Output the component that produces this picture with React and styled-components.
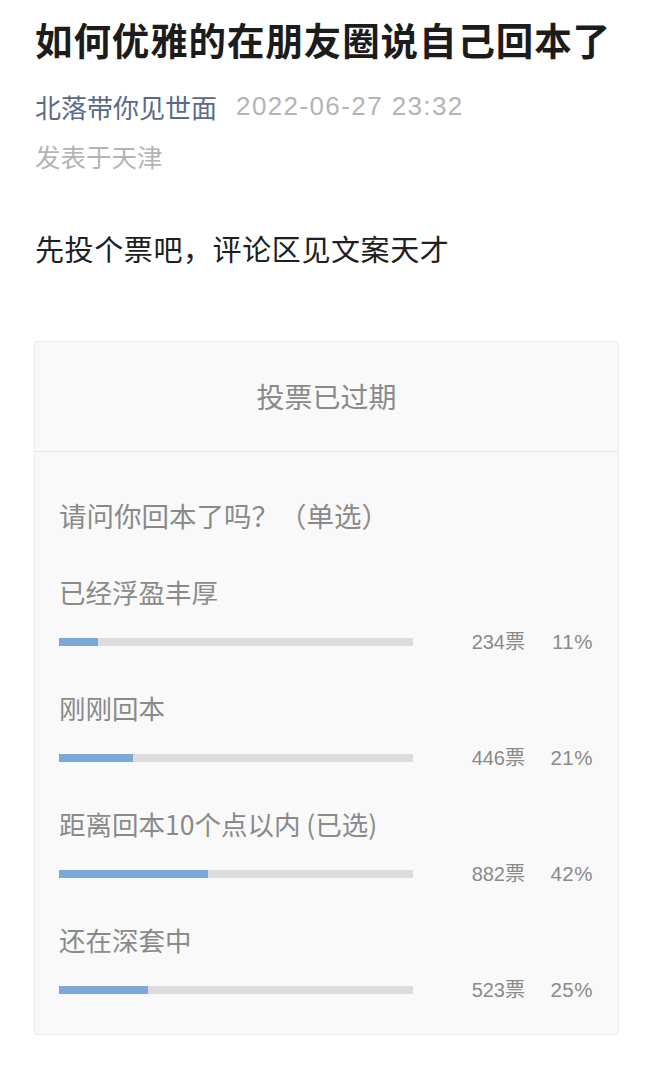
import React from 'react';
import styled, { createGlobalStyle } from 'styled-components';

const GlobalStyle = createGlobalStyle`
    body {
        margin: 0;
        background: #ffffff;
        font-family: "Noto Sans CJK SC", "Noto Sans", sans-serif;
    }
`;

const options = [
    { label: '已经浮盈丰厚', votes: 234, pct: 11 },
    { label: '刚刚回本', votes: 446, pct: 21 },
    { label: '距离回本10个点以内 (已选)', votes: 882, pct: 42 },
    { label: '还在深套中', votes: 523, pct: 25 },
];

const App = () => {
    return (
        <>
            <GlobalStyle />
            <Page>
                <Title>如何优雅的在朋友圈说自己回本了</Title>
                <Meta>
                    <Author>北落带你见世面</Author>
                    <Time>2022-06-27 23:32</Time>
                </Meta>
                <Location>发表于天津</Location>
                <Body>先投个票吧，评论区见文案天才</Body>

                <VoteCard>
                    <VoteHeader>投票已过期</VoteHeader>
                    <VoteBody>
                        <Question>请问你回本了吗？（单选）</Question>
                        {options.map((opt) => (
                            <Option key={opt.label}>
                                <OptionLabel>{opt.label}</OptionLabel>
                                <ResultRow>
                                    <Track>
                                        <Fill style={{ width: `${opt.pct}%` }} />
                                    </Track>
                                    <Count>{opt.votes}票</Count>
                                    <Percent>{opt.pct}%</Percent>
                                </ResultRow>
                            </Option>
                        ))}
                    </VoteBody>
                </VoteCard>
            </Page>
        </>
    );
};

const Page = styled.div`
    padding: 13px 34px 40px 35px;
`;

const Title = styled.h1`
    margin: 0;
    font-size: 37.5px;
    line-height: 52px;
    font-weight: 700;
    color: #1c1c1c;
    letter-spacing: 0.9px;
    white-space: nowrap;
`;

const Meta = styled.div`
    display: flex;
    align-items: center;
    gap: 19px;
    margin-top: 21px;
    height: 40px;
`;

const Author = styled.span`
    font-size: 26px;
    color: #5b6987;
`;

const Time = styled.span`
    font-family: "Liberation Sans", "Noto Sans CJK SC", sans-serif;
    font-size: 26px;
    letter-spacing: 1.4px;
    color: #b4b4b4;
`;

const Location = styled.div`
    margin-top: 10px;
    font-size: 25.5px;
    line-height: 40px;
    color: #b4b4b4;
`;

const Body = styled.p`
    margin: 50px 0 0;
    font-size: 29px;
    line-height: 44px;
    letter-spacing: 0.6px;
    color: #202020;
`;

const VoteCard = styled.div`
    margin: 71px 0 0 -1px;
    border: 1px solid #ececec;
    border-radius: 4px;
    background: #f9f9f9;
`;

const VoteHeader = styled.div`
    box-sizing: border-box;
    height: 110px;
    display: flex;
    align-items: center;
    justify-content: center;
    border-bottom: 1px solid #e6e6e6;
    font-size: 28px;
    color: #8a8a8a;
    padding-bottom: 2px;
`;

const VoteBody = styled.div`
    display: flex;
    flex-direction: column;
    gap: 31px;
    padding: 43px 25px 29px 24px;
`;

const Question = styled.div`
    font-size: 27.5px;
    line-height: 40px;
    color: #8a8a8a;
    margin-bottom: 6px;
`;

const Option = styled.div`
    display: flex;
    flex-direction: column;
    gap: 15px;
`;

const OptionLabel = styled.div`
    font-size: 26.5px;
    line-height: 40px;
    color: #8a8a8a;
`;

const ResultRow = styled.div`
    display: grid;
    grid-template-columns: 354px 1fr 68px;
    align-items: center;
    height: 30px;
`;

const Track = styled.div`
    height: 8px;
    background: #dcdcdc;
`;

const Fill = styled.div`
    height: 100%;
    background: #7ba7d9;
`;

const Count = styled.span`
    text-align: right;
    font-family: "Liberation Sans", "Noto Sans CJK SC", sans-serif;
    font-size: 20px;
    line-height: 30px;
    height: 30px;
    color: #8a8a8a;
`;

const Percent = styled.span`
    text-align: right;
    font-family: "Liberation Sans", "Noto Sans CJK SC", sans-serif;
    font-size: 20.5px;
    line-height: 30px;
    height: 30px;
    letter-spacing: 0.5px;
    color: #8a8a8a;
`;

export default App;
